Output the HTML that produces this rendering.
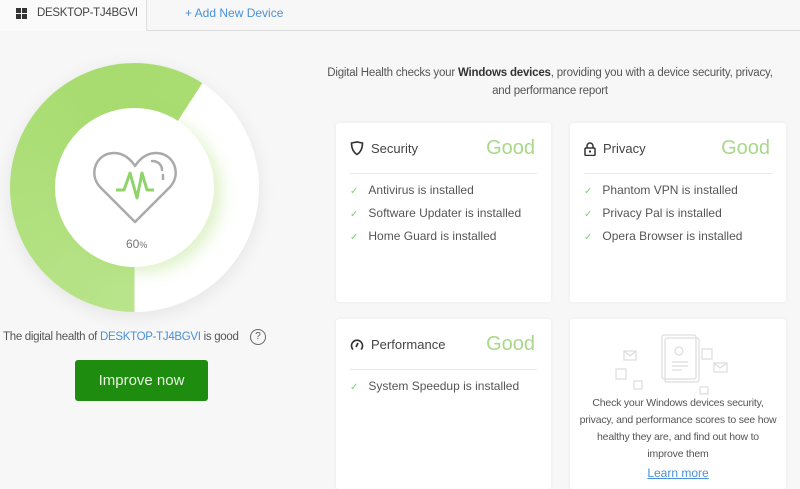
<!DOCTYPE html>
<html><head><meta charset="utf-8"><style>
*{margin:0;padding:0;box-sizing:border-box}
body{width:800px;height:480px;overflow:hidden;background:#f7f7f7;font-family:"Liberation Sans",sans-serif;color:#555;position:relative}
.abs{position:absolute;white-space:nowrap}
.tabline{left:0;top:30px;width:800px;height:1px;background:#ddd}
.tab{left:0;top:0;width:147px;height:31px;background:#fafafa;border-right:1px solid #ddd;font-size:11.5px;color:#444}
.card{background:#fff;border-radius:3px;box-shadow:0 0 4px rgba(0,0,0,.06)}
.ct{position:absolute;left:14px;top:18px;font-size:13px;color:#444;display:flex;align-items:center;gap:7px}
.good{position:absolute;right:16px;top:14px;font-size:20px;color:#a9d88a}
.hr{position:absolute;left:14px;right:14px;top:50px;height:1px;background:#e8e8e8}
.li{position:absolute;left:14px;font-size:12px;color:#555}
.li span{color:#7dcf7d;margin-right:10px;font-size:10px}
</style></head><body>
<div class="abs tabline"></div>
<div class="abs tab">
<svg class="abs" style="left:16px;top:8px" width="11" height="11"><rect x="0" y="0" width="5" height="5" fill="#333"/><rect x="6" y="0" width="5" height="5" fill="#333"/><rect x="0" y="6" width="5" height="5" fill="#333"/><rect x="6" y="6" width="5" height="5" fill="#333"/></svg>
<div class="abs" style="left:37px;top:7px;letter-spacing:-0.3px">DESKTOP-TJ4BGVI</div></div>
<div class="abs" style="left:185px;top:6px;font-size:12px;color:#4a90d9">+ Add New Device</div>

<div class="abs" style="left:10px;top:63px;width:249px;height:249px;border-radius:50%;background:conic-gradient(from 180deg,#b9e48c 0deg,#a8dc70 150deg,#a9dd72 213deg,#fff 213deg);box-shadow:0 4px 18px rgba(0,0,0,.08)"></div>
<div class="abs" style="left:55px;top:108px;width:159px;height:159px;border-radius:50%;background:#fff;box-shadow:8px 6px 14px rgba(170,220,110,.35)"></div>
<svg class="abs" style="left:92px;top:150px" width="86" height="76" viewBox="0 0 86 76">
<path d="M43 72 L8 37 C-4 24 4 3 22 3 C32 3 39 10 43 16 C47 10 54 3 64 3 C82 3 90 24 78 37 Z" fill="none" stroke="#aaa" stroke-width="2.5" stroke-linejoin="round"/>
<path d="M60 11 C66 11 70 15 70 20 M71 25 V29" fill="none" stroke="#aaa" stroke-width="2.5" stroke-linecap="round"/>
<path d="M24 40 H32 L38 23 L45 48 L50 23 L55 40 H62" fill="none" stroke="#8fd36a" stroke-width="3" stroke-linejoin="round"/>
</svg>
<div class="abs" style="left:126px;top:237px;font-size:12px;color:#777">60<span style="font-size:9px">%</span></div>

<div class="abs" style="left:3px;top:331px;font-size:11.5px;color:#555;letter-spacing:-0.3px">The digital health of <span style="color:#4a90d9">DESKTOP-TJ4BGVI</span> is good</div>
<div class="abs" style="left:250px;top:329px;width:16px;height:16px;border:1.5px solid #666;border-radius:50%;font-size:10px;text-align:center;line-height:13px;color:#555">?</div>
<div class="abs" style="left:75px;top:360px;width:133px;height:41px;background:#1e8c0f;border-radius:3px;color:#e8f5e0;font-size:15px;text-align:center;line-height:41px">Improve now</div>

<div class="abs" style="left:300px;top:64px;width:500px;text-align:center;font-size:11.5px;line-height:18px;color:#555;letter-spacing:-0.2px">Digital Health checks your <b style="color:#333">Windows devices</b>, providing you with a device security, privacy,<br>and performance report</div>

<div class="abs card" style="left:336px;top:123px;width:215px;height:179px">
<div class="ct"><svg width="14" height="15" viewBox="0 0 14 15"><path d="M1.5 2 L7 1 L12.5 2 Q12.5 10 7 13.5 Q1.5 10 1.5 2Z" fill="none" stroke="#333" stroke-width="1.6"/></svg>Security</div>
<div class="good">Good</div><div class="hr"></div>
<div class="li" style="top:60px"><span>✓</span>Antivirus is installed</div>
<div class="li" style="top:83px"><span>✓</span>Software Updater is installed</div>
<div class="li" style="top:106px"><span>✓</span>Home Guard is installed</div>
</div>
<div class="abs card" style="left:570px;top:123px;width:216px;height:179px">
<div class="ct"><svg width="12" height="14" viewBox="0 0 12 14"><path d="M3 6 V4 A3 3 0 0 1 9 4 V6" fill="none" stroke="#333" stroke-width="1.5"/><rect x="1" y="6" width="10" height="7.5" rx="1" fill="none" stroke="#333" stroke-width="1.5"/><rect x="5" y="8.5" width="2" height="2" fill="#333"/></svg>Privacy</div>
<div class="good">Good</div><div class="hr"></div>
<div class="li" style="top:60px"><span>✓</span>Phantom VPN is installed</div>
<div class="li" style="top:83px"><span>✓</span>Privacy Pal is installed</div>
<div class="li" style="top:106px"><span>✓</span>Opera Browser is installed</div>
</div>
<div class="abs card" style="left:336px;top:319px;width:215px;height:170px">
<div class="ct"><svg width="14" height="14" viewBox="0 0 14 14"><path d="M3 11.5 A5.5 5.5 0 1 1 11 11.5" fill="none" stroke="#333" stroke-width="1.6"/><path d="M6 9 L8 5" stroke="#333" stroke-width="1.8"/></svg>Performance</div>
<div class="good">Good</div><div class="hr"></div>
<div class="li" style="top:60px"><span>✓</span>System Speedup is installed</div>
</div>
<div class="abs card" style="left:570px;top:319px;width:216px;height:170px">
<svg class="abs" style="left:40px;top:8px" width="140" height="70" viewBox="0 0 140 70" fill="none" stroke="#ddd" stroke-width="1.2">
<rect x="52" y="8" width="34" height="44" rx="2"/><rect x="55" y="11" width="34" height="44" rx="2"/>
<circle cx="69" cy="24" r="4"/><path d="M62 35h16M62 39h16M62 43h10"/>
<rect x="14" y="24" width="12" height="9"/><path d="M14 24l6 5 6-5"/>
<rect x="6" y="42" width="10" height="10"/><rect x="24" y="54" width="8" height="8"/>
<rect x="104" y="36" width="13" height="9"/><path d="M104 36l6 5 7-5"/>
<rect x="92" y="22" width="10" height="10"/><rect x="90" y="60" width="8" height="7"/>
</svg>
<div class="abs" style="left:0;top:76px;width:216px;text-align:center;font-size:10.5px;line-height:17px;color:#555;letter-spacing:-0.2px">Check your Windows devices security,<br>privacy, and performance scores to see how<br>healthy they are, and find out how to<br>improve them</div>
<div class="abs" style="left:0;top:147px;width:216px;text-align:center;font-size:12px;color:#4a90d9;text-decoration:underline">Learn more</div>
</div>
</body></html>
